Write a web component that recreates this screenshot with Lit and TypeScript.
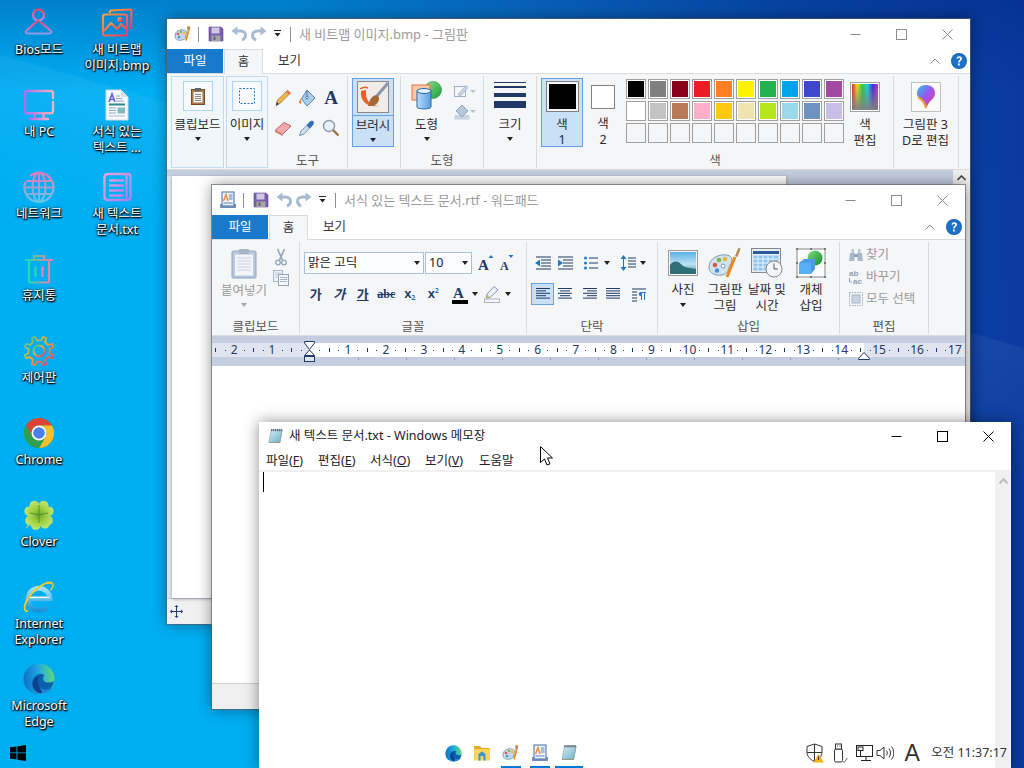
import { LitElement, html, css, svg } from 'lit';
import { customElement } from 'lit/decorators.js';

const I = (w: number, h: number, vb: string, body: unknown, cls = '') =>
  html`<svg class=${cls} width=${w} height=${h} viewBox=${vb}>${body}</svg>`;

/* ---------- application icons ---------- */
const paintApp = (s = 18) => I(s, s, '0 0 18 18', svg`
  <path d="M1 11C1 6 6 4 10 5c3 .7 3 3 2 5-1 3-1 5-4 5-3 1-7 0-7-4z" fill="#c9dcea" stroke="#6f8ba5" stroke-width=".8"/>
  <circle cx="4" cy="9" r="1.3" fill="#d9534f"/><circle cx="7" cy="7" r="1.3" fill="#7fb24a"/><circle cx="10" cy="8" r="1.2" fill="#e8b33a"/><circle cx="5" cy="12.3" r="1.2" fill="#4a8fd0"/>
  <circle cx="8" cy="11.5" r="1" fill="#fff" stroke="#7f9bb5" stroke-width=".5"/>
  <path d="M14.6 5.5 12 15.5" stroke="#ee8a1d" stroke-width="1.8"/><path d="M13.2 1.5h3l-.4 4h-2.4z" fill="#b98a57"/><path d="M13 1.5l1-1 1 1 1-1 .4 1z" fill="#e0a050"/>`);
const wordApp = (s = 18) => I(s, s, '0 0 18 18', svg`
  <path d="M1.5 16.5h15v-3h-15z" fill="#8fa6c4" stroke="#4c6a96" stroke-width=".7"/>
  <rect x="3" y="1" width="12" height="14" fill="#eef4fb" stroke="#3f6fa5"/>
  <path d="M4.5 10 7 3.5 9 10" fill="none" stroke="#ee8a2d" stroke-width="1.4"/>
  <path d="M9.8 4h3.7M9.8 6h3.7M9.8 8h3.7M4.5 12h9" stroke="#5b87b8"/>`);
const noteApp = (s = 18) => I(s, s, '0 0 18 18', svg`
  <defs><linearGradient id="nt" x1="0" y1="0" x2="1" y2="1"><stop offset="0" stop-color="#d7edf2"/><stop offset="1" stop-color="#6fb1c8"/></linearGradient></defs>
  <path d="M4.5 2.5h12L14 16H2z" fill="#a58e62"/><path d="M4.5 2H16l-2.3 13H2z" fill="url(#nt)" stroke="#8aaabc" stroke-width=".6"/>
  <path d="M5 1v2.4M7 1v2.4M9 1v2.4M11 1v2.4M13 1v2.4M15 1v2.4" stroke="#3f4f5f"/>`);
const save = I(16, 16, '0 0 16 16', svg`
  <path d="M1 1h12l2 2v12H1z" fill="#7a5db0" stroke="#5b4590" stroke-width=".6"/><rect x="3.5" y="1.5" width="8" height="6" fill="#cfc8e4"/><rect x="3.5" y="9.5" width="9" height="5.5" fill="#a5a5a8"/><rect x="5.5" y="10.5" width="2" height="3.5" fill="#666"/>`);
const undoBody = svg`<path d="M5.500 5h4c3 0 5 1.800 5 4.300 0 2.200-1.300 3.800-3.500 5" fill="none" stroke="#a9bbd3" stroke-width="3"/><path d="M6.500 .5V9.500L.5 5z" fill="#a9bbd3"/>`;
const undo = I(16, 16, '0 0 16 16', undoBody);
const redo = I(16, 16, '0 0 16 16', svg`<g transform="matrix(-1 0 0 1 16 0)">${undoBody}</g>`);
const help = I(16, 16, '0 0 16 16', svg`<circle cx="8" cy="8" r="8" fill="#1569b8"/><circle cx="8" cy="8" r="6.800" fill="#1d72c6"/><path d="M5.600 5.800C5.800 4 7 3.300 8.300 3.300c1.700 0 2.700 1 2.700 2.300 0 1.200-.7 1.700-1.500 2.300-.6.4-.8.800-.8 1.500H7.200c0-1.200.3-1.800 1-2.400.6-.5 1-.8 1-1.300 0-.5-.4-.9-1-.9-.7 0-1 .4-1.100 1zM7.100 10.500h1.700v1.900H7.100z" fill="#fff"/>`);
const chev = I(10, 6, '0 0 10 6', svg`<path d="M.5 5.500 5 1l4.500 4.500" fill="none" stroke="#8f8f8f"/>`);
const qatArrow = I(8, 8, '0 0 8 8', svg`<path d="M0 .5h7" stroke="#222"/><path d="M.5 3h6L3.500 6.500z" fill="#222"/>`);

/* ---------- desktop icons ---------- */
const biosI = I(32, 32, '0 0 32 32', svg`
  <defs><linearGradient id="bi" x1="0" y1="0" x2="0" y2="1"><stop offset="0" stop-color="#f0456c"/><stop offset=".6" stop-color="#d86ac0"/><stop offset="1" stop-color="#8c9be8"/></linearGradient></defs>
  <g fill="none" stroke="url(#bi)" stroke-width="2.200" stroke-linecap="round" stroke-linejoin="round"><circle cx="15.500" cy="8" r="5.500"/><path d="M15 13.500 3.500 23.500c-1.500 1.300-.8 3 1 3h22c1.800 0 2.500-1.700 1-3L18 15.500"/></g>`);
const bmpI = I(32, 32, '0 0 32 32', svg`
  <defs><linearGradient id="bm" x1="0" y1="0" x2="1" y2="1"><stop offset="0" stop-color="#f9a13a"/><stop offset="1" stop-color="#f0386b"/></linearGradient></defs>
  <g fill="none" stroke="url(#bm)" stroke-width="2.200" stroke-linejoin="round"><path d="M8.500 6 9.500 3.500 29 2.500c1 0 1.500.5 1.500 1.500l-.5 18"/><rect x="2" y="7.500" width="24" height="21" rx="2"/><path d="M3 24l7-8 6 6 4-5 5 5"/><circle cx="19" cy="12.500" r="1.500"/></g>`);
const pcI = I(32, 32, '0 0 32 32', svg`
  <defs><linearGradient id="pc" x1="0" y1="0" x2="1" y2="0"><stop offset="0" stop-color="#b06cf0"/><stop offset="1" stop-color="#f3b0bc"/></linearGradient></defs>
  <g fill="none" stroke="url(#pc)" stroke-width="2.400" stroke-linecap="round"><path d="M30 9V4.500C30 3 29 2 27.500 2h-23C3 2 2 3 2 4.500V22c0 1.500 1 2.300 2.500 2.300h23c1.500 0 2.500-.8 2.500-2.300V13"/><path d="M11.500 24.500v5M20.500 24.500v5M7 30h18"/></g>`);
const rtfI = I(32, 32, '0 0 32 32', svg`
  <path d="M5 1h15l7 7v23H5z" fill="#f8fafd" stroke="#cfd8e3"/><path d="M20 1v7h7z" fill="#d6deea"/>
  <path d="M8 13 11 5l3 8M9 10.500h4" fill="none" stroke="#6a63d8" stroke-width="1.700"/><path d="M15 7h4M15 9.500h6M15 12h8" stroke="#8aa0c0"/>
  <rect x="8" y="14.500" width="16" height="2" fill="#2a8a88"/><path d="M8 19h7M8 21.500h7M8 24h7" stroke="#8aa8b8"/><rect x="16.500" y="18.500" width="7.500" height="6" fill="#7fb8c0"/><path d="M8 27h16" stroke="#a8b8c8"/>`);
const netI = I(32, 32, '0 0 32 32', svg`
  <defs><linearGradient id="nw" x1="0" y1="0" x2="0" y2="1"><stop offset="0" stop-color="#e878b8"/><stop offset="1" stop-color="#62c6e8"/></linearGradient></defs>
  <g fill="none" stroke="url(#nw)" stroke-width="2"><path d="M7 5a14.500 14.500 0 1 1-4.500 6" stroke-width="2.200"/><ellipse cx="16" cy="16" rx="6.500" ry="14.500"/><path d="M16 1.500v29M3 10h26M1.500 16.500h29M3.500 23h25"/></g>`);
const txtI = I(32, 32, '0 0 32 32', svg`
  <defs><linearGradient id="tx" x1="0" y1="0" x2="1" y2="1"><stop offset="0" stop-color="#e8a4d8"/><stop offset="1" stop-color="#a880f0"/></linearGradient></defs>
  <g fill="none" stroke="url(#tx)" stroke-width="2.400" stroke-linecap="round"><path d="M24 3H7C4.500 3 3.500 4 3.500 6.500v19C3.500 28 4.500 29 7 29h19c2.500 0 3.500-1 3.500-3.500V5.500C29.500 4 28.500 3 27 3"/><path d="M9 9.500h13M9 14.500h13M9 19.500h13M9 24.500h13M25.500 3v23"/></g>`);
const trashI = I(32, 32, '0 0 32 32', svg`
  <defs><linearGradient id="tr" x1="0" y1="0" x2="1" y2="0"><stop offset="0" stop-color="#24dca8"/><stop offset="1" stop-color="#f080a8"/></linearGradient></defs>
  <g fill="none" stroke="url(#tr)" stroke-width="2.200" stroke-linecap="round"><path d="M3 7h26M11 6.500V3h10v3.500"/><path d="M6 7v21c0 1 .8 1.500 1.500 1.500h17c1 0 1.500-.5 1.500-1.500V7"/><path d="M12.500 14v9M19.500 14v9"/></g>`);
const gearPath = () => {
  const pts: string[] = [];
  for (let i = 0; i < 8; i++) {
    const a = (i * Math.PI) / 4 - Math.PI / 8;
    [[-0.2, 10.800], [-0.11, 14.800], [0.11, 14.800], [0.2, 10.800]].forEach(([d, r]) => {
      pts.push(`${(16 + r * Math.cos(a + d)).toFixed(1)} ${(16 + r * Math.sin(a + d)).toFixed(1)}`);
    });
  }
  return 'M' + pts.join('L') + 'Z';
};
const gearI = I(32, 32, '0 0 32 32', svg`
  <defs><linearGradient id="ge" x1="0" y1="0" x2="1" y2="1"><stop offset="0" stop-color="#20c8b0"/><stop offset=".45" stop-color="#f8b020"/><stop offset="1" stop-color="#f02880"/></linearGradient></defs>
  <path d=${gearPath()} fill="none" stroke="url(#ge)" stroke-width="1.800" stroke-linejoin="round"/><circle cx="16" cy="16" r="5.500" fill="none" stroke="url(#ge)" stroke-width="2"/>`);
const chromeSeg = 'M3 8.500A15 15 0 0 1 29 8.500H16A7.500 7.500 0 0 0 9.500 19.750Z';
const chromeI = I(32, 32, '0 0 32 32', svg`
  <circle cx="16" cy="16" r="15" fill="#2da94f"/>
  <path d=${chromeSeg} fill="#db4437"/><path d=${chromeSeg} fill="#fbc02d" transform="rotate(120 16 16)"/><path d=${chromeSeg} fill="#2f9e50" transform="rotate(240 16 16)"/>
  <circle cx="16" cy="16" r="7.500" fill="#fff"/><circle cx="16" cy="16" r="5.800" fill="#4a80e8"/>`);
const leaf = 'M16 16C10 13 5 9 7 4.500 9 .5 14.500 1 16 5c1.500-4 7-4.500 9-.5 2 4.500-3 8.500-9 11.500Z';
const cloverI = I(32, 32, '0 0 32 32', svg`
  <defs><radialGradient id="cl" gradientUnits="userSpaceOnUse" cx="16" cy="16" r="16"><stop offset="0" stop-color="#6aa62c"/><stop offset=".45" stop-color="#9bd040"/><stop offset="1" stop-color="#c4e878"/></radialGradient></defs>
  <path d="M14 17 3 29" stroke="#8fc8a0" stroke-width="1.400"/>
  <path d=${leaf} fill="url(#cl)"/><path d=${leaf} fill="url(#cl)" transform="rotate(95 16 16)"/><path d=${leaf} fill="url(#cl)" transform="rotate(-95 16 16)"/><path d=${leaf} fill="url(#cl)" transform="rotate(172 16 16)"/>
  <path d="M16 6V24M7 14 16 16 25 14" fill="none" stroke="#4d8a28" stroke-width=".9"/>`);
const ieI = I(32, 32, '0 0 32 32', svg`
  <defs><linearGradient id="ie" x1="0" y1="0" x2="0" y2="1"><stop offset="0" stop-color="#9fe2fa"/><stop offset="1" stop-color="#1a94d8"/></linearGradient></defs>
  <path d="M6.500 17.500H27A11 11 0 1 0 24 26" fill="none" stroke="url(#ie)" stroke-width="5"/><path d="M7 16.500H26.500" stroke="#f4fbff" stroke-width="1.200"/>
  <path d="M29 2C24 -.5 10 8 3.500 20 .5 26 1 31 5 30" fill="none" stroke="#f4c92a" stroke-width="1.800"/><path d="M24 2.500c3-1 5.500-1.500 6 1 .4 1.700-1 4-2.500 6" fill="none" stroke="#f4c92a" stroke-width="1.500"/>`);
const edgeI = (s: number) => I(s, s, '0 0 32 32', svg`
  <defs><linearGradient id="ed" x1="0" y1=".4" x2="1" y2=".3"><stop offset="0" stop-color="#0d72c8"/><stop offset=".5" stop-color="#22a8e0"/><stop offset="1" stop-color="#5fdc78"/></linearGradient></defs>
  <circle cx="16" cy="16" r="15.500" fill="url(#ed)"/>
  <path d="M31 18c-3 2-8 2-10 0 -2-2-.5-5 .5-6 -3-2-9-1-11.500 4-2.500 6 1 13 7 14.500 7-.5 13-5.500 14-12.500z" fill="#0a5fae"/>
  <path d="M10 23c-1-5 2-9.500 7-9.500-2.500 2-3.500 6 -1 10 3 4 9 4 13 1-3 4-8 6-12 5.500-3.500-1-6-3.500-7-7z" fill="#0e3f8c"/>
  <path d="M16 24c3 3 8 3 13 1-3 4-7 6-11.500 5.500C20 29 18 27 16 24z" fill="#1f86d6"/>`);

/* ---------- paint ribbon ---------- */
const clipI = I(16, 18, '0 0 16 18', svg`<rect x="1.500" y="2.500" width="13" height="15" fill="#a87a50" stroke="#70492a"/><rect x="3.500" y="5" width="9" height="10.500" fill="#f8f6ef"/><path d="M5 7.500h6M5 9.500h6M5 11.500h6M5 13.500h6" stroke="#888"/><rect x="5" y="1" width="6" height="3" fill="#666"/>`);
const selI = I(16, 16, '0 0 16 16', svg`<rect x=".5" y=".5" width="15" height="15" fill="none" stroke="#2a78c8" stroke-dasharray="2 1.500"/>`);
const pencilI = I(18, 18, '0 0 18 18', svg`<path d="M2 16.500 3.500 11 13.500 1.500 16.500 4 6.500 14z" fill="#e8b850" stroke="#8f6a28" stroke-width=".7"/><path d="M13.500 1.500 16.500 4 15 5.500 12 3z" fill="#e86a50"/><path d="M2 16.500 2.800 13 5 15.300z" fill="#333"/>`);
const fillI = I(18, 18, '0 0 18 18', svg`<path d="M9 1 17 9 9 17 3.500 10z" fill="#a9cdee" stroke="#5a87b5"/><path d="M9 8V1" stroke="#5a6f8a"/><circle cx="9" cy="8.500" r="1.300" fill="#fff" stroke="#5a6f8a"/><path d="M3.500 8.500 1 13c.2 1 1 1.500 2 1.500V10z" fill="#ee6a20"/>`);
const eraserI = I(18, 18, '0 0 18 18', svg`<path d="M1 11.500 10 3.500 17 7 8.500 15.500z" fill="#f4a8a8" stroke="#b86868"/><path d="M1 11.500 8.500 15.500V17L1 13z" fill="#d87878"/>`);
const dropperI = I(18, 18, '0 0 18 18', svg`<path d="M1.500 16.500 3 12 9 6.500 11.500 9 6 15z" fill="#cfe3f5" stroke="#5a7ea8" stroke-width=".8"/><path d="M8.500 6 12 2.500c1-1 3-1 3.500 0s.5 2.500-.5 3.500L12 9.500z" fill="#2f6fb8"/>`);
const magI = I(18, 18, '0 0 18 18', svg`<circle cx="7" cy="7" r="5.500" fill="#e6f0f8" stroke="#8a9aa8" stroke-width="1.400"/><path d="M11 11 16.500 16.500" stroke="#a0703a" stroke-width="2.400"/>`);
const brushI = I(32, 32, '0 0 32 32', svg`
  <rect x=".5" y=".5" width="31" height="31" fill="#f0ede8" stroke="#8a8a8a"/>
  <path d="M4 10C3 20 10 27 22 25 14 25 8 20 9 9z" fill="#e8602a"/><path d="M3 8c3-2 6-2 8-1" stroke="#e8602a" stroke-width="1.500" fill="none"/>
  <path d="M31 2 19 16" stroke="#8a97a8" stroke-width="3"/><path d="M13 19c2-4 6-6 8-4s1 7-3 9c-3 1-5 1-7 1 1-2 1-4 2-6z" fill="#a5683a"/>`);
const shapesI = I(32, 32, '0 0 32 32', svg`
  <defs><linearGradient id="cy" x1="0" y1="0" x2="1" y2="0"><stop offset="0" stop-color="#b8dcf8"/><stop offset="1" stop-color="#5a9ee0"/></linearGradient><linearGradient id="gb" x1="0" y1="0" x2="1" y2="1"><stop offset="0" stop-color="#8fe08f"/><stop offset="1" stop-color="#1a9a3a"/></linearGradient></defs>
  <circle cx="22" cy="9" r="8.500" fill="url(#gb)" stroke="#2a8a3a" stroke-width=".6"/><rect x="1" y="4" width="18" height="15" fill="#f9c8a8" stroke="#e8703a"/>
  <path d="M6 10v16c0 2.500 14 2.500 14 0V10z" fill="url(#cy)" stroke="#2a68a8"/><ellipse cx="13" cy="10" rx="7" ry="2.500" fill="#e0f0fc" stroke="#2a68a8"/>`);
const outlineI = I(22, 14, '0 0 22 14', svg`<rect x=".5" y="2.500" width="11" height="10" fill="none" stroke="#9fb0c8"/><path d="M4 10.500 12 1.500l2 2-8 9z" fill="#c8d4e4" stroke="#8fa3bc" stroke-width=".6"/><path d="M16 6h6l-3 3z" fill="#b8c0cc"/>`);
const shapeFillI = I(22, 16, '0 0 22 16', svg`<rect x=".5" y="11" width="15" height="4.500" fill="#c8d4e4"/><path d="M8 1 14 7 8 13 2 7z" fill="#b8c8dc" stroke="#8fa3bc"/><path d="M16 6h6l-3 3z" fill="#b8c0cc"/>`);
const sizeI = I(32, 26, '0 0 32 26', svg`<rect y="0" width="32" height="1" fill="#1f3a66"/><rect y="4" width="32" height="2" fill="#1f3a66"/><rect y="11" width="32" height="4" fill="#1f3a66"/><rect y="19" width="32" height="7" fill="#1f3a66"/>`);
const rainbowI = I(26, 26, '0 0 26 26', svg`
  <defs><linearGradient id="rb" x1="0" y1="0" x2="1" y2="0"><stop offset="0" stop-color="#f02020"/><stop offset=".2" stop-color="#f0e020"/><stop offset=".4" stop-color="#20d040"/><stop offset=".6" stop-color="#20d0e0"/><stop offset=".8" stop-color="#3030e0"/><stop offset="1" stop-color="#e020c0"/></linearGradient><linearGradient id="rg" x1="0" y1="0" x2="0" y2="1"><stop offset="0" stop-color="#808080" stop-opacity="0"/><stop offset="1" stop-color="#808080"/></linearGradient></defs>
  <rect width="26" height="26" fill="url(#rb)"/><rect width="26" height="26" fill="url(#rg)"/>`);
const p3dI = I(20, 24, '0 0 20 24', svg`
  <defs><linearGradient id="p3" x1="0" y1="0" x2="1" y2="1"><stop offset="0" stop-color="#28c8e8"/><stop offset=".5" stop-color="#a050f0"/><stop offset="1" stop-color="#f04880"/></linearGradient></defs>
  <path d="M10 0c6 0 9 4 9 8.500 0 5-5 7-6.500 10L10 23.500 7.500 18.500C6 15.500 1 13.500 1 8.500 1 4 4 0 10 0z" fill="url(#p3)"/><path d="M2 12c3 2.500 7 4 8 11" fill="none" stroke="#f8a020" stroke-width="2"/>`);

/* ---------- wordpad ribbon ---------- */
const pasteI = I(26, 31, '0 0 26 31', svg`<rect x="1" y="3" width="24" height="27" rx="1.500" fill="#b8c8de" stroke="#8fa3bc"/><rect x="4" y="6.500" width="18" height="21" fill="#f2f5f9"/><path d="M6 10h14M6 13h14M6 16h14M6 19h14M6 22h14" stroke="#c8d2e0"/><rect x="8" y="1" width="10" height="5" rx="1" fill="#a8b4c4"/>`);
const cutI = I(12, 18, '0 0 12 18', svg`<path d="M2.500 1 7.500 12M9.500 1 4.500 12" stroke="#93a5bd" stroke-width="1.600"/><circle cx="3" cy="14.500" r="2.300" fill="none" stroke="#93a5bd" stroke-width="1.300"/><circle cx="9" cy="14.500" r="2.300" fill="none" stroke="#93a5bd" stroke-width="1.300"/>`);
const copyI = I(16, 16, '0 0 16 16', svg`<rect x=".5" y=".5" width="9" height="11" fill="#eef2f7" stroke="#a8b8cc"/><path d="M2 3h6M2 5h6M2 7h6" stroke="#c0cad8"/><rect x="5.500" y="4.500" width="10" height="11" fill="#f5f8fb" stroke="#93a5bd"/><path d="M7 7.500h7M7 9.500h7M7 11.500h7" stroke="#a8b8cc"/>`);
const growI = I(18, 18, '0 0 18 18', svg`<path d="M13 1 15.500 4h-5z" fill="#1e78c8"/><text x="0" y="16" font-family="Liberation Serif,serif" font-weight="700" font-size="15" fill="#1f3a66">A</text>`);
const shrinkI = I(18, 18, '0 0 18 18', svg`<path d="M13 4 15.500 1h-5z" fill="#1e78c8"/><text x="2" y="16" font-family="Liberation Serif,serif" font-weight="700" font-size="12" fill="#1f3a66">A</text>`);
const lines = (arr: [number, number][], c = '#1f3a66') => svg`${arr.map((a, i) => svg`<path d="M${a[0]} ${2.500 + i * 2.400}H${a[1]}" stroke=${c}/>`)}`;
const alignL = I(16, 16, '0 0 16 16', lines([[1, 15], [1, 11], [1, 15], [1, 11], [1, 15]]));
const alignC = I(16, 16, '0 0 16 16', lines([[1, 15], [3, 13], [1, 15], [3, 13], [1, 15]]));
const alignR = I(16, 16, '0 0 16 16', lines([[1, 15], [5, 15], [1, 15], [5, 15], [1, 15]]));
const alignJ = I(16, 16, '0 0 16 16', lines([[1, 15], [1, 15], [1, 15], [1, 15], [1, 15]]));
const paraI = I(16, 16, '0 0 16 16', svg`<path d="M1 3H15M1 6H6M1 9H6M1 12H6M1 15H6" stroke="#1f3a66"/><path d="M8 6H15V7H14V14H13V7H11V14H10V10C7 10 7 6 10 6z" fill="#1e78c8"/>`);
const indDec = I(18, 16, '0 0 18 16', svg`<path d="M2 2H17M7 5H17M7 8H17M7 11H17M2 14H17" stroke="#1f3a66"/><path d="M1 8 6 4.500V11.500z" fill="#1e78c8"/>`);
const indInc = I(18, 16, '0 0 18 16', svg`<path d="M2 2H17M7 5H17M7 8H17M7 11H17M2 14H17" stroke="#1f3a66"/><path d="M7 8 2 4.500V11.500z" fill="#1e78c8"/>`);
const bullets = I(16, 16, '0 0 16 16', svg`<circle cx="2.500" cy="3" r="1.500" fill="#1e78c8"/><circle cx="2.500" cy="8" r="1.500" fill="#1e78c8"/><circle cx="2.500" cy="13" r="1.500" fill="#1e78c8"/><path d="M6 3H15M6 8H15M6 13H15" stroke="#1f3a66"/>`);
const spacing = I(16, 18, '0 0 16 18', svg`<path d="M3.500 1 6.500 5H.5zM3.500 17 .5 13H6.500z" fill="#1e78c8"/><path d="M3.500 4V14" stroke="#1e78c8"/><path d="M8 4H16M8 7H16M8 10H16M8 13H16" stroke="#1f3a66"/>`);
const fontColorI = I(16, 19, '0 0 16 19', svg`<text x="1" y="13" font-family="Liberation Serif,serif" font-weight="700" font-size="15" fill="#1f3a66">A</text><rect y="15" width="16" height="4" fill="#000"/>`);
const markI = I(18, 18, '0 0 18 18', svg`<rect x=".5" y="14" width="15" height="3.500" fill="none" stroke="#a8b4c4"/><path d="M2 13 3 9 10 1.500 14 5 6 12.500z" fill="#eef3f8" stroke="#7f96b5"/><path d="M2 13 3 9.500 5.500 12z" fill="#e8b030"/>`);
const photoI = I(30, 26, '0 0 30 26', svg`
  <defs><linearGradient id="ph" x1="0" y1="0" x2="0" y2="1"><stop offset="0" stop-color="#5ab0e8"/><stop offset=".55" stop-color="#bfe2f2"/><stop offset="1" stop-color="#3a8a9a"/></linearGradient></defs>
  <rect x=".5" y=".5" width="29" height="25" fill="#f6f6f6" stroke="#9a9a9a"/><rect x="2" y="2" width="26" height="22" fill="url(#ph)"/><path d="M2 15C7 9 11 12 15 16 19 18 24 18 28 19V24H2z" fill="#2f6f78"/>`);
const paintBig = I(34, 32, '0 0 34 32', svg`
  <path d="M1 20C1 11 11 7 19 8c6 1 6 6 3 10-2 5-2 9-8 10-6 1-13-1-13-8z" fill="#cfe2ee" stroke="#7f9bb5"/>
  <circle cx="7" cy="18" r="2.300" fill="#d9534f"/><circle cx="11" cy="13" r="2.300" fill="#7fb24a"/><circle cx="17" cy="12" r="2.200" fill="#e8b33a"/><circle cx="9" cy="23.500" r="2.200" fill="#4a8fd0"/><circle cx="15" cy="19" r="2" fill="#fff" stroke="#7f9bb5"/>
  <path d="M27 10 19 30" stroke="#ee8a1d" stroke-width="3"/><path d="M27 9l2.500 1 3-8-2-1.500z" fill="#b98a57"/>`);
const dateI = I(32, 30, '0 0 32 30', svg`
  <rect x=".5" y=".5" width="29" height="24" fill="#e8edf2" stroke="#888"/><rect x="2" y="3" width="26" height="3" fill="#2a5a9a"/><rect x="2.500" y="7.500" width="25" height="15" fill="#8fc4f0"/>
  <path d="M7 7.500V22.500M12 7.500V22.500M17 7.500V22.500M22 7.500V22.500M2.500 11H27.500M2.500 15H27.500M2.500 19H27.500" stroke="#fff" stroke-width=".8"/>
  <circle cx="23" cy="21" r="8" fill="#f4f6f7" stroke="#888"/><path d="M23 15.500V21H27" fill="none" stroke="#555"/>`);
const objI = I(32, 32, '0 0 32 32', svg`
  <defs><linearGradient id="og" x1="0" y1="0" x2="1" y2="1"><stop offset="0" stop-color="#7fe07f"/><stop offset="1" stop-color="#128a2a"/></linearGradient></defs>
  <rect x="2" y="2" width="28" height="28" fill="#fff" stroke="#888"/><path d="M1 1h2v2H1zM29 1h2v2h-2zM1 29h2v2H1zM29 29h2v2h-2zM15 29h2v2h-2zM29 15h2v2h-2zM1 15h2v2H1zM15 1h2v2h-2z" fill="#777"/>
  <circle cx="20" cy="11" r="7.500" fill="url(#og)"/><path d="M4 16 9 12H20V22L16 27H4z" fill="#4a9ae8"/><path d="M4 16H16V27H4z" fill="#5ab0f4"/>`);
const findI = I(16, 16, '0 0 16 16', svg`<path d="M2 6H6.500V14H1zM9.500 6H14L15 14H9.500z" fill="#a8b8cc"/><rect x="6" y="7" width="4" height="3" fill="#8fa0b8"/><rect x="3.500" y="2" width="2.500" height="4" fill="#b8c4d4"/><rect x="10" y="2" width="2.500" height="4" fill="#b8c4d4"/>`);
const replaceI = I(16, 16, '0 0 16 16', svg`<text x="1" y="7" font-family="Liberation Sans,sans-serif" font-weight="700" font-size="8" fill="#8fa0b8">ab</text><text x="5" y="15" font-family="Liberation Sans,sans-serif" font-weight="700" font-size="8" fill="#8fa0b8">ac</text><path d="M1.500 9V13H4" fill="none" stroke="#8fa0b8"/>`);
const selAllI = I(14, 14, '0 0 14 14', svg`<rect x=".5" y=".5" width="13" height="13" fill="none" stroke="#a0aec0" stroke-dasharray="1.500 1"/><rect x="3" y="3" width="8" height="8" fill="#c8d4e2" stroke="#a8b6c8"/>`);

/* ---------- tray ---------- */
const winLogo = I(18, 18, '0 0 18 18', svg`<path d="M1 3.300 7.500 2.400V8.400H1zM8.400 2.300 17 1V8.400H8.400zM1 9.300H7.500V15.500L1 14.600zM8.400 9.300H17V17L8.400 15.700z" fill="#000"/>`);
const folderI = I(18, 16, '0 0 18 16', svg`<path d="M1 1H7L8.500 3H16.500L17 15H1z" fill="#e8a820"/><rect x="1" y="4" width="16" height="11.500" fill="#fbd45a"/><path d="M5.500 15.500V9L9 6.500 12.500 9V15.500H10.500V11H7.500V15.500z" fill="#3a90d8"/>`);
const shieldI = I(18, 20, '0 0 18 20', svg`<path d="M8.500 1 1 3.500V9c0 4 3 7.500 7.500 9.500 4.500-2 7.500-5.500 7.500-9.500V3.500z" fill="none" stroke="#333"/><path d="M8.500 1V18.500M1 9.500H16" stroke="#333"/><path d="M12.500 11 18 19.500H7.500z" fill="#f4b400"/><path d="M12.500 13.500V17" stroke="#333"/>`);
const usbI = I(16, 20, '0 0 16 20', svg`<rect x="2.500" y="6" width="8" height="13" rx="1.500" fill="#fff" stroke="#333"/><rect x="3.500" y="1" width="6" height="5" fill="#fff" stroke="#333"/><path d="M5 3h1M7.500 3h1" stroke="#333"/><path d="M10.500 18 12 19.500 15.500 15" fill="none" stroke="#666"/>`);
const netwI = I(18, 18, '0 0 18 18', svg`<rect x=".5" y="1.500" width="16" height="11" fill="#fff" stroke="#222"/><rect x="2" y="3" width="5" height="3.500" fill="#fff" stroke="#222"/><path d="M4.500 6.500V12.500M10 12.500V16M5 16.500H15" stroke="#222"/>`);
const volI = I(18, 16, '0 0 18 16', svg`<path d="M1 5.500H4L8 2V14L4 10.500H1z" fill="#fff" stroke="#333"/><path d="M10.500 5.500c1 1.500 1 3.500 0 5M13 3.500c2 2.500 2 6.500 0 9M15.500 1.500c3 4 3 9 0 13" fill="none" stroke="#333"/>`);

const tri = html`<i class="tri"></i>`;
const palette = [
  ['#000000', '#7f7f7f', '#880015', '#ed1c24', '#ff7f27', '#fff200', '#22b14c', '#00a2e8', '#3f48cc', '#a349a4'],
  ['#ffffff', '#c3c3c3', '#b97a57', '#ffaec9', '#ffc90e', '#efe4b0', '#b5e61d', '#99d9ea', '#7092be', '#c8bfe7'],
  Array(10).fill(''),
];
const deskItems: [unknown, string[]][] = [
  [biosI, ['Bios모드']], [pcI, ['내 PC']], [netI, ['네트워크']], [trashI, ['휴지통']], [gearI, ['제어판']],
  [chromeI, ['Chrome']], [cloverI, ['Clover']], [ieI, ['Internet', 'Explorer']], [edgeI(32), ['Microsoft', 'Edge']],
  [bmpI, ['새 비트맵', '이미지.bmp']], [rtfI, ['서식 있는', '텍스트 ...']], [txtI, ['새 텍스트', '문서.txt']],
];

@customElement('app-root')
export class AppRoot extends LitElement {
  static styles = css`
    :host { display: block; width: 1024px; height: 768px; overflow: hidden; font: 13px/16px "Noto Sans", "Noto Sans CJK KR", sans-serif; color: #2b2b2b; }
    svg { display: block; flex: none; }
    .desk { position: relative; width: 1024px; height: 768px; overflow: hidden;
      background:
        linear-gradient(196deg, rgba(0,50,150,.1) 0, rgba(0,50,150,0) 32.7%, rgba(255,255,255,.05) 32.9%, rgba(255,255,255,0) 46%),
        linear-gradient(180deg, rgba(0,30,120,.3) 0, rgba(0,30,120,0) 12%),
        linear-gradient(90deg, #00aef3 0, #00aef3 27%, #0a82d6 50%, #0a50b2 78%, #0a3aa0 100%); }
    .icons { position: absolute; left: 0; top: 5px; display: grid; grid-auto-flow: column; grid-template-rows: repeat(9, 82px); grid-auto-columns: 78px; }
    .di { display: flex; flex-direction: column; align-items: center; gap: 3px; padding-top: 2px; }
    .di span { display: block; color: #fff; white-space: nowrap; text-align: center; font-size: 12.500px; text-shadow: 0 1px 2px #000, 1px 1px 1px #000, 0 0 3px rgba(0,0,0,.85); }

    .win { position: absolute; display: flex; flex-direction: column; background: #fff; box-shadow: 0 0 0 1px rgba(90,95,105,.65), 0 0 14px rgba(0,0,0,.45); overflow: hidden; box-sizing: border-box; }
    .paint { left: 167px; top: 19px; width: 803px; height: 605px; }
    .wordpad { left: 212px; top: 185px; width: 753px; height: 524px; }
    .notepad { left: 259px; top: 422px; width: 752px; height: 346px; box-shadow: 0 0 14px rgba(0,0,0,.45); }

    .title { display: flex; align-items: center; height: 30px; flex: none; padding-left: 7px; color: #9b9b9b; white-space: nowrap; }
    .sep { width: 1px; height: 15px; background: #8f8f8f; flex: none; }
    .m6 { margin-left: 6px; } .m7 { margin-left: 7px; } .m9 { margin-left: 9px; } .m4 { margin-left: 4px; } .m8 { margin-left: 8px; }
    .ctl { margin-left: auto; display: flex; }
    .ctl div { width: 46px; height: 30px; display: flex; align-items: center; justify-content: center; }

    .tabs { display: flex; height: 24px; flex: none; align-items: stretch; position: relative; z-index: 1; }
    .tab { display: flex; align-items: center; justify-content: center; font-size: 12.500px; line-height: 18px; color: #333; box-sizing: border-box; }
    .tab.file { width: 56px; background: #1979ca; color: #fff; }
    .tab.home { width: 39px; margin-left: 1px; background: #f5f6f7; border: 1px solid #dadbdc; border-bottom: 0; height: 25px; }
    .tab.view { width: 53px; }
    .tabr { margin-left: auto; display: flex; align-items: center; gap: 11px; padding-right: 3px; }

    .rib { display: flex; flex: none; background: #f5f6f7; border-top: 1px solid #dadbdc; border-bottom: 1px solid #dadbdc; box-sizing: border-box; }
    .rib.p { height: 97px; padding: 2px 0 1px 4px; }
    .rib.w { height: 97px; padding: 2px 0 1px 0; }
    .grp { display: flex; flex-direction: column; flex: none; border-right: 1px solid #dadbdc; box-sizing: border-box; }
    .gb { flex: 1; display: flex; min-height: 0; }
    .gl { height: 16px; line-height: 18px; text-align: center; font-size: 12.500px; color: #555; flex: none; }
    .col { display: flex; flex-direction: column; align-items: center; flex: none; }
    .lb { height: 16px; line-height: 19px; font-size: 12.500px; white-space: nowrap; text-align: center; }
    .big .lb { line-height: 18px; }
    .c1 .lb.a { line-height: 22px; }
    .ar { height: 16px; display: flex; align-items: center; justify-content: center; }
    .tri { display: block; width: 0; height: 0; border: 3.500px solid transparent; border-top: 4px solid #222; border-bottom: 0; }
    .tri.g { border-top-color: #a9a9a9; }

    .hov { height: 92px; border: 1px solid #bcdcf6; background: #f1f6fb; box-sizing: border-box; padding-top: 4px; margin-right: 2px; }
    .ibox { width: 30px; height: 30px; border: 1px solid #aed4f5; box-sizing: border-box; display: flex; align-items: center; justify-content: center; margin-bottom: 4px; background: #f7fafd; }
    .tools { display: grid; grid-template-columns: repeat(3, 24px); grid-template-rows: repeat(2, 30px); padding: 7px 0 0 3px; place-items: center; }
    .sel { background: #c9e0f7; border: 1px solid #64a2e0; box-sizing: border-box; }
    .brush { width: 42px; height: 69px; margin: 2px 0 0 4px; }
    .brush .top { width: 100%; height: 37px; display: flex; align-items: center; justify-content: center; border-bottom: 1px solid #64a2e0; box-sizing: border-box; }
    .bx { height: 36px; display: flex; align-items: center; justify-content: center; }
    .c1 { width: 42px; height: 69px; margin: 2px 0 0 4px; padding-top: 2px; }
    .c1s { width: 31px; height: 31px; background: #000; border: 2px solid #f5f6f7; outline: 1px solid #808080; box-sizing: border-box; margin: 1px 0 3px; }
    .c2s { width: 24px; height: 24px; background: #fff; border: 1px solid #808080; box-sizing: border-box; margin: 9px 0 5px; }
    .pal { display: grid; grid-template-columns: repeat(10, 22px); grid-auto-rows: 22px; padding: 3px 0 0 3px; }
    .sw { width: 20px; height: 20px; border: 1px solid #a0a0a0; box-sizing: border-box; padding: 1px; }
    .sw b { display: block; width: 100%; height: 100%; }
    .sw.f { background: #fff; }

    .work { flex: 1; min-height: 0; background: #c5cee0; display: flex; position: relative; }
    .lstrip { width: 5px; flex: none; margin-top: 6px; background: #dfe5f0; }
    .canvas { width: 614px; flex: none; margin-top: 6px; background: #fff; box-shadow: 0 1px 3px rgba(70,80,110,.5); }
    .vsb { margin-left: auto; width: 17px; background: #f0f0f0; display: flex; justify-content: center; padding-top: 5px; box-sizing: border-box; }
    .status { height: 26px; flex: none; background: #f0f0f0; border-top: 1px solid #d0d0d0; box-sizing: border-box; display: flex; align-items: center; padding-left: 3px; }

    .combo { height: 22px; border: 1px solid #abc0d8; background: #fcfdff; box-sizing: border-box; display: flex; align-items: center; justify-content: space-between; padding: 0 3px 0 3px; font-size: 12.500px; color: #222; }
    .fr { display: flex; align-items: center; height: 22px; }
    .fb { width: 23.500px; height: 22px; display: flex; align-items: center; justify-content: center; flex: none; color: #1f3a66; font-weight: 700; font-size: 13px; }
    .fb.i { font-style: italic; }
    .fb.u { text-decoration: underline; }
    .fb.s { text-decoration: line-through; font-family: "Liberation Serif", serif; font-size: 12px; }
    .fb small { font-size: 7px; color: #1e78c8; line-height: 7px; }
    .fb small.dn { align-self: flex-end; margin-bottom: 4px; }
    .fb small.up { align-self: flex-start; margin-top: 4px; }
    .fb .x { font-family: "Liberation Sans", sans-serif; font-size: 13px; }
    .ib { height: 22px; display: flex; align-items: center; justify-content: center; flex: none; box-sizing: border-box; }
    .ib.on { background: #c9e0f7; border: 1px solid #64a2e0; }
    .colw { display: flex; flex-direction: column; padding-top: 10px; }
    .bigs { display: flex; padding: 3px 0 0 2px; }
    .big { display: flex; flex-direction: column; align-items: center; flex: none; }
    .big .ic { height: 36px; display: flex; align-items: center; justify-content: center; flex: none; }
    .edit { padding: 2px 0 0 8px; display: flex; flex-direction: column; }
    .er { display: flex; align-items: center; height: 22px; gap: 3px; color: #9a9a9a; font-size: 12.500px; line-height: 18px; white-space: nowrap; }
    .er .e { width: 15px; display: flex; justify-content: center; }

    .ruler { height: 30px; flex: none; background: #c5cee0; padding-top: 7px; box-sizing: border-box; }
    .rband { position: relative; height: 14px; background: linear-gradient(90deg, #e0e4ef 98px, #fff 98px, #fff 652px, #e0e4ef 652px); }
    .rn { position: absolute; top: -1px; width: 20px; margin-left: -10px; text-align: center; font-size: 12px; color: #1f3a66; }
    .rt { position: absolute; background: #1f3a66; width: 1px; }
    .rt.d { top: 7px; height: 1px; }
    .rt.h { top: 5px; height: 4px; }
    .rt.tab { top: 15px; height: 2px; background: #8f9bb0; }
    .mk { position: absolute; }
    .mk.l { left: 91px; top: -2px; }
    .mk.r { left: 645px; top: 9px; }
    .doc { flex: 1; min-height: 0; background: #fff; }

    .ntitle { display: flex; align-items: center; height: 28px; flex: none; padding-left: 8px; gap: 5px; color: #222; font-size: 12.500px; line-height: 18px; }
    .nctl { margin-left: auto; display: flex; }
    .nctl div { width: 46px; height: 28px; display: flex; align-items: center; justify-content: center; }
    .menu { display: flex; height: 20px; flex: none; font-size: 12.500px; line-height: 21px; align-items: center; padding-left: 7px; color: #222; }
    .menu span { white-space: nowrap; flex: none; }
    .menu u { text-decoration: underline; }
    .nbody { flex: 1; min-height: 0; display: flex; border-top: 2px solid #f0f0f0; }
    .nt { flex: 1; padding: 0 0 0 4px; }
    .caret { width: 1px; height: 20px; background: #000; }
    .nsb { width: 16px; background: #f0f0f0; display: flex; justify-content: center; padding-top: 6px; box-sizing: border-box; }

    .cursor { position: absolute; left: 540px; top: 446px; }
    .bar { position: absolute; left: 0; right: 0; bottom: 0; height: 30px; display: flex; align-items: center; }
    .start { margin-left: 9px; margin-right: 411.500px; }
    .app { width: 29px; height: 30px; display: flex; flex-direction: column; align-items: center; flex: none; }
    .app .ai { height: 28px; display: flex; align-items: center; justify-content: center; flex: none; padding-top: 2px; box-sizing: border-box; }
    .app .ul { height: 2px; flex: none; background: #0078d7; }
    .tray { margin-left: auto; display: flex; align-items: center; height: 30px; }
    .tb { display: flex; align-items: center; justify-content: center; height: 30px; flex: none; }
    .ta { font-size: 23px; color: #333; line-height: 30px; font-family: "Liberation Sans", sans-serif; }
    .clock { margin: 0 17px 0 2px; white-space: nowrap; font-size: 12.500px; color: #333; padding-bottom: 1px; }
  `;

  private winCtl(c: string) {
    return html`<div class="ctl">
      <div>${I(11, 11, '0 0 11 11', svg`<path d="M.5 5.500h10" stroke=${c}/>`)}</div>
      <div>${I(11, 11, '0 0 11 11', svg`<rect x=".5" y=".5" width="10" height="10" fill="none" stroke=${c}/>`)}</div>
      <div>${I(11, 11, '0 0 11 11', svg`<path d="M.5.500l10 10M10.500.500l-10 10" stroke=${c}/>`)}</div>
    </div>`;
  }

  private head(app: unknown, title: string) {
    return html`
      <div class="title">
        ${app}<i class="sep m6"></i><span class="m9">${save}</span><span class="m7">${undo}</span><span class="m4">${redo}</span><span class="m7">${qatArrow}</span><i class="sep m8"></i><span class="m8">${title}</span>
        ${this.winCtl('#8c8c8c')}
      </div>
      <div class="tabs">
        <div class="tab file">파일</div><div class="tab home">홈</div><div class="tab view">보기</div>
        <div class="tabr">${chev}${help}</div>
      </div>`;
  }

  private bigBtn(icon: unknown, lbls: string[], arrow: boolean, w: number) {
    return html`<div class="big" style="width:${w}px">
      <div class="ic">${icon}</div>
      ${lbls.map((l) => html`<div class="lb">${l}</div>`)}
      ${arrow ? html`<div class="ar">${tri}</div>` : ''}
    </div>`;
  }

  private paintRibbon() {
    return html`<div class="rib p">
      <div class="col hov" style="width:53px"><div class="ibox">${clipI}</div><div class="lb">클립보드</div><div class="ar">${tri}</div></div>
      <div class="col hov" style="width:42px;margin-right:0"><div class="ibox">${selI}</div><div class="lb">이미지</div><div class="ar">${tri}</div></div>
      <div class="grp" style="width:80px"><div class="gb"><div class="tools">${pencilI}${fillI}<span style="font:700 19px/20px 'Liberation Serif',serif;color:#1f3a66">A</span>${eraserI}${dropperI}${magI}</div></div><div class="gl">도구</div></div>
      <div class="grp" style="width:53px"><div class="gb"><div class="brush sel">
        <div class="top">${brushI}</div><div class="col"><div class="lb">브러시</div><div class="ar">${tri}</div></div>
      </div></div></div>
      <div class="grp" style="width:83px"><div class="gb">
        <div class="col" style="width:49px;padding-left:2px;box-sizing:border-box"><div class="bx" style="height:36px;margin-top:3px">${shapesI}</div><div class="lb">도형</div><div class="ar">${tri}</div></div>
        <div class="col" style="width:30px;padding-top:8px;gap:6px">${outlineI}${shapeFillI}</div>
      </div><div class="gl">도형</div></div>
      <div class="grp" style="width:53px"><div class="gb"><div class="col" style="width:52px;padding-top:6px"><div style="height:33px">${sizeI}</div><div class="lb">크기</div><div class="ar">${tri}</div></div></div></div>
      <div class="grp" style="width:357px"><div class="gb">
        <div class="col c1 sel"><div class="c1s"></div><div class="lb a">색</div><div class="lb">1</div></div>
        <div class="col" style="width:40px"><div class="c2s"></div><div class="lb">색</div><div class="lb">2</div></div>
        <div class="pal">${palette.flat().map((c) => html`<div class="sw ${c ? 'f' : ''}">${c ? html`<b style="background:${c}"></b>` : ''}</div>`)}</div>
        <div class="col" style="width:38px;padding-top:6px"><div style="height:33px;display:flex;justify-content:center"><div class="ibox" style="border:1px solid #a0a0a0;padding:1px;background:#fff">${rainbowI}</div></div><div class="lb">색</div><div class="lb">편집</div></div>
      </div><div class="gl">색</div></div>
      <div class="grp" style="width:65px"><div class="gb"><div class="col" style="width:63px;padding-top:6px"><div style="height:33px"><div class="ibox" style="border:1px solid #c0c0c0;background:#fafafa">${p3dI}</div></div><div class="lb">그림판 3</div><div class="lb">D로 편집</div></div></div></div>
    </div>`;
  }

  private wordRibbon() {
    return html`<div class="rib w">
      <div class="grp" style="width:88px"><div class="gb" style="padding-top:3px">
        <div class="col" style="width:63px;padding-left:1px;box-sizing:border-box;color:#9a9a9a"><div class="bx">${pasteI}</div><div class="lb">붙여넣기</div><div class="ar"><i class="tri g"></i></div></div>
        <div class="col" style="width:12px;padding-top:3px;gap:4px">${cutI}${copyI}</div>
      </div><div class="gl">클립보드</div></div>

      <div class="grp" style="width:227px"><div class="gb"><div class="colw" style="padding-left:4px">
        <div class="fr">
          <div class="combo" style="width:120px"><span>맑은 고딕</span>${tri}</div>
          <div class="combo" style="width:47px;margin-left:1px"><span>10</span>${tri}</div>
          <div class="ib" style="width:20px;margin-left:5px">${growI}</div><div class="ib" style="width:20px">${shrinkI}</div>
        </div>
        <div class="fr" style="margin-top:9px">
          <div class="fb">가</div><div class="fb i">가</div><div class="fb u">가</div><div class="fb s">abc</div>
          <div class="fb"><span class="x">x</span><small class="dn">2</small></div><div class="fb"><span class="x">x</span><small class="up">2</small></div>
          <div class="ib" style="width:20px;margin-left:4.500px">${fontColorI}</div><div class="ib" style="width:10px">${tri}</div>
          <div class="ib" style="width:20px;margin-left:3px">${markI}</div><div class="ib" style="width:10px">${tri}</div>
        </div>
      </div></div><div class="gl">글꼴</div></div>

      <div class="grp" style="width:131px"><div class="gb"><div class="colw" style="padding-left:4px">
        <div class="fr">
          <div class="ib" style="width:23px">${indDec}</div><div class="ib" style="width:22px">${indInc}</div>
          <div class="ib" style="width:22px;margin-left:4px">${bullets}</div><div class="ib" style="width:10px">${tri}</div>
          <div class="ib" style="width:20px;margin-left:6px">${spacing}</div><div class="ib" style="width:10px">${tri}</div>
        </div>
        <div class="fr" style="margin-top:9px">
          <div class="ib on" style="width:23px">${alignL}</div><div class="ib" style="width:22px">${alignC}</div>
          <div class="ib" style="width:22px;margin-left:3px">${alignR}</div><div class="ib" style="width:22px;margin-left:1px">${alignJ}</div>
          <div class="ib" style="width:22px;margin-left:4px">${paraI}</div>
        </div>
      </div></div><div class="gl">단락</div></div>

      <div class="grp" style="width:182px"><div class="gb"><div class="bigs">
        ${this.bigBtn(photoI, ['사진'], true, 46)}
        ${this.bigBtn(paintBig, ['그림판', '그림'], false, 38)}
        ${this.bigBtn(dateI, ['날짜 및', '시간'], false, 46)}
        ${this.bigBtn(objI, ['개체', '삽입'], false, 42)}
      </div></div><div class="gl">삽입</div></div>

      <div class="grp" style="width:89px"><div class="gb"><div class="edit">
        <div class="er"><span class="e">${findI}</span>찾기</div>
        <div class="er"><span class="e">${replaceI}</span>바꾸기</div>
        <div class="er"><span class="e">${selAllI}</span>모두 선택</div>
      </div></div><div class="gl">편집</div></div>
    </div>`;
  }

  private ruler() {
    const u = 37.94, o = 98;
    const x = (n: number) => o + n * u;
    const nums = [-2, -1, ...Array.from({ length: 17 }, (_, i) => i + 1)];
    const ticks: unknown[] = [];
    for (let n = -3; n < 17; n++) {
      ticks.push(html`<i class="rt d" style="left:${x(n + 0.25)}px"></i><i class="rt h" style="left:${x(n + 0.5)}px"></i><i class="rt d" style="left:${x(n + 0.75)}px"></i>`);
    }
    const tabs = Array.from({ length: 11 }, (_, i) => html`<i class="rt tab" style="left:${146 + i * 48}px"></i>`);
    return html`<div class="ruler"><div class="rband">
      ${ticks}${tabs}
      ${nums.map((n) => html`<span class="rn" style="left:${x(n)}px">${Math.abs(n)}</span>`)}
      <svg class="mk l" width="14" height="22" viewBox="0 0 14 22"><path d="M1.500.5h10V2L6.500 8.500 1.500 2zM6.500 9 11.500 14.500H1.500z" fill="#fff" stroke="#1f3a66"/><rect x="1.500" y="15.500" width="10" height="5" fill="#e0e4ef" stroke="#1f3a66"/></svg>
      <svg class="mk r" width="14" height="8" viewBox="0 0 14 8"><path d="M7 .5 12.500 6.500V7.500H1.500V6.500z" fill="#fff" stroke="#1f3a66"/></svg>
    </div></div>`;
  }

  render() {
    return html`<div class="desk">
      <div class="icons">
        ${deskItems.map(([ic, ls]) => html`<div class="di">${ic}<div>${ls.map((l) => html`<span>${l}</span>`)}</div></div>`)}
      </div>

      <div class="win paint">
        ${this.head(paintApp(), '새 비트맵 이미지.bmp - 그림판')}
        ${this.paintRibbon()}
        <div class="work"><div class="lstrip"></div><div class="canvas"></div>
          <div class="vsb">${I(9, 6, '0 0 9 6', svg`<path d="M.5 5 4.500 1l4 4" fill="none" stroke="#444" stroke-width="1.600"/>`)}</div></div>
        <div class="status">${I(13, 13, '0 0 13 13', svg`<path d="M6.500 1V12M1 6.500H12" stroke="#1f3a66"/><path d="M6.500 0 8.500 2H4.500zM6.500 13 4.500 11H8.500zM0 6.500 2 4.500V8.500zM13 6.500 11 8.500V4.500z" fill="#1f3a66"/>`)}</div>
      </div>

      <div class="win wordpad">
        ${this.head(wordApp(), '서식 있는 텍스트 문서.rtf - 워드패드')}
        ${this.wordRibbon()}
        ${this.ruler()}
        <div class="doc"></div>
        <div class="status"></div>
      </div>

      <div class="win notepad">
        <div class="ntitle">${noteApp(17)}<span>새 텍스트 문서.txt - Windows 메모장</span>
          <div class="nctl">
            <div>${I(11, 11, '0 0 11 11', svg`<path d="M.5 5.500h10" stroke="#000"/>`)}</div>
            <div>${I(11, 11, '0 0 11 11', svg`<rect x=".5" y=".5" width="10" height="10" fill="none" stroke="#000"/>`)}</div>
            <div>${I(11, 11, '0 0 11 11', svg`<path d="M.5.500l10 10M10.500.500l-10 10" stroke="#000"/>`)}</div>
          </div>
        </div>
        <div class="menu">
          <span style="width:52px">파일(<u>F</u>)</span><span style="width:52px">편집(<u>E</u>)</span><span style="width:55px">서식(<u>O</u>)</span><span style="width:54px">보기(<u>V</u>)</span><span>도움말</span>
        </div>
        <div class="nbody"><div class="nt"><div class="caret"></div></div>
          <div class="nsb">${I(9, 6, '0 0 9 6', svg`<path d="M.5 5.500 4.500 1l4 4.500" fill="none" stroke="#bdbdbd" stroke-width="2"/>`)}</div></div>
      </div>

      <svg class="cursor" width="14" height="21" viewBox="0 0 14 21"><path d="M.5.5V16.500L4.500 13 7 19 10 17.800 7.500 12H12.500z" fill="#fff" stroke="#000"/></svg>

      <div class="bar">
        <div class="start">${winLogo}</div>
        <div class="app"><div class="ai">${edgeI(17)}</div></div>
        <div class="app"><div class="ai">${folderI}</div></div>
        <div class="app"><div class="ai">${paintApp()}</div><div class="ul" style="width:20px"></div></div>
        <div class="app"><div class="ai">${wordApp()}</div><div class="ul" style="width:20px"></div></div>
        <div class="app"><div class="ai">${noteApp()}</div><div class="ul" style="width:28px"></div></div>
        <div class="tray">
          <div class="tb" style="width:20px">${shieldI}</div>
          <div class="tb" style="width:30px">${usbI}</div>
          <div class="tb" style="width:20px">${netwI}</div>
          <div class="tb" style="width:20px">${volI}</div>
          <div class="tb ta" style="width:34px">A</div>
          <div class="clock">오전 11:37:17</div>
        </div>
      </div>
    </div>`;
  }
}
